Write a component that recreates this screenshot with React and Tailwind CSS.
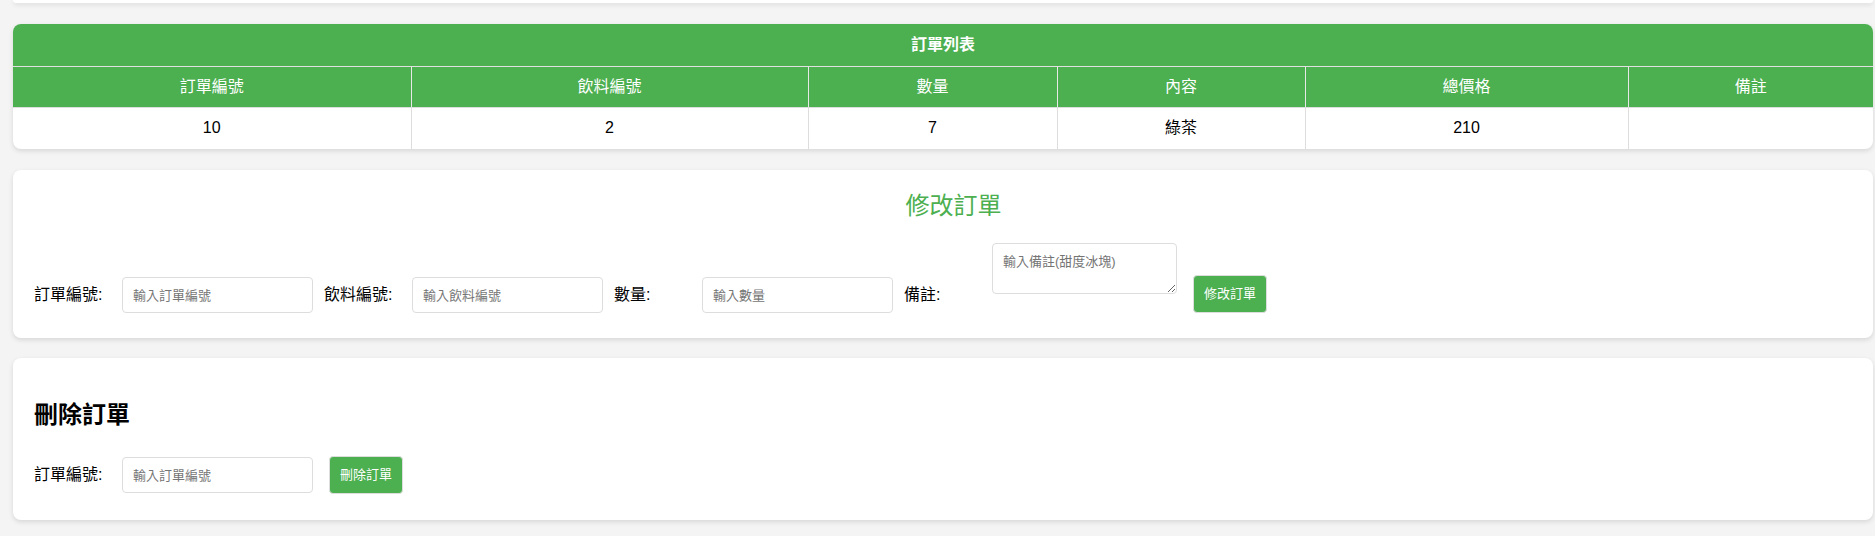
const font = { fontFamily: '"Liberation Sans", "Noto Sans CJK TC", sans-serif' }

const columns = [
  { label: '訂單編號', w: 'w-[398px]' },
  { label: '飲料編號', w: 'w-[397px]' },
  { label: '數量', w: 'w-[249px]' },
  { label: '內容', w: 'w-[248px]' },
  { label: '總價格', w: 'w-[323px]' },
  { label: '備註', w: 'w-[245px]' },
]

const orders = [{ id: 10, drinkId: 2, qty: 7, name: '綠茶', total: 210, note: '' }]

function Field({ label, placeholder }) {
  return (
    <>
      <label className="w-[88px] shrink-0 h-[36px] flex items-center text-[16px] text-black">{label}</label>
      <input
        placeholder={placeholder}
        className="w-[191px] h-[36px] shrink-0 mr-[11px] border border-[#dddddd] rounded-[4px] px-[10px] text-[13px] placeholder:text-[#757575] bg-white"
      />
    </>
  )
}

function GreenButton({ children }) {
  return (
    <button className="h-[38px] w-[74px] shrink-0 bg-[#4caf50] text-white text-[13px] rounded-[4px] border border-[#dddddd]">
      {children}
    </button>
  )
}

export default function App() {
  return (
    <div className="min-h-screen bg-[#f4f4f4] pl-[13px] pr-[2px]" style={font}>
      <div className="h-[3px] bg-white rounded-b-[8px] shadow-[0_2px_4px_rgba(0,0,0,0.1)]" />

      <div className="mt-[21px] bg-white rounded-[8px] shadow-[0_2px_5px_rgba(0,0,0,0.12)] overflow-hidden">
        <table className="w-full table-fixed border-collapse">
          <colgroup>
            {columns.map(c => <col key={c.label} className={c.w} />)}
          </colgroup>
          <thead>
            <tr className="bg-[#4caf50] text-white h-[42px]">
              <th colSpan={6} className="text-[16px] font-bold border-b border-[#e0e0e0]">訂單列表</th>
            </tr>
            <tr className="bg-[#4caf50] text-white h-[41px]">
              {columns.map((c, i) => (
                <th key={c.label} className={`text-[16px] font-normal border-b border-[#dddddd] ${i > 0 ? 'border-l border-l-[#e8e8e8]' : ''}`}>
                  {c.label}
                </th>
              ))}
            </tr>
          </thead>
          <tbody>
            {orders.map(o => (
              <tr key={o.id} className="h-[42px] text-[16px] text-black text-center">
                <td>{o.id}</td>
                <td className="border-l border-[#dddddd]">{o.drinkId}</td>
                <td className="border-l border-[#dddddd]">{o.qty}</td>
                <td className="border-l border-[#dddddd]">{o.name}</td>
                <td className="border-l border-[#dddddd]">{o.total}</td>
                <td className="border-l border-[#dddddd]">{o.note}</td>
              </tr>
            ))}
          </tbody>
        </table>
      </div>

      <div className="mt-[21px] bg-white rounded-[8px] shadow-[0_2px_5px_rgba(0,0,0,0.12)] pt-[20px] pb-[25px] pl-[21px]">
        <h2 className="text-center text-[24px] leading-[32px] text-[#4caf50] font-normal">修改訂單</h2>
        <div className="mt-[21px] flex items-end">
          <Field label="訂單編號:" placeholder="輸入訂單編號" />
          <Field label="飲料編號:" placeholder="輸入飲料編號" />
          <Field label="數量:" placeholder="輸入數量" />
          <label className="w-[88px] shrink-0 h-[36px] flex items-center text-[16px] text-black">備註:</label>
          <textarea
            placeholder="輸入備註(甜度冰塊)"
            className="w-[185px] h-[51px] shrink-0 mb-[19px] mr-[16px] border border-[#dddddd] rounded-[4px] px-[10px] py-[8px] text-[13px] placeholder:text-[#757575] block"
          />
          <GreenButton>修改訂單</GreenButton>
        </div>
      </div>

      <div className="mt-[20px] bg-white rounded-[8px] shadow-[0_2px_5px_rgba(0,0,0,0.12)] pt-[41px] pb-[26px] pl-[21px]">
        <h2 className="text-[24px] leading-[32px] font-bold text-black">刪除訂單</h2>
        <div className="mt-[25px] flex items-center">
          <label className="w-[88px] shrink-0 text-[16px] text-black">訂單編號:</label>
          <input
            placeholder="輸入訂單編號"
            className="w-[191px] h-[36px] mr-[16px] border border-[#dddddd] rounded-[4px] px-[10px] text-[13px] placeholder:text-[#757575]"
          />
          <GreenButton>刪除訂單</GreenButton>
        </div>
      </div>
    </div>
  )
}
